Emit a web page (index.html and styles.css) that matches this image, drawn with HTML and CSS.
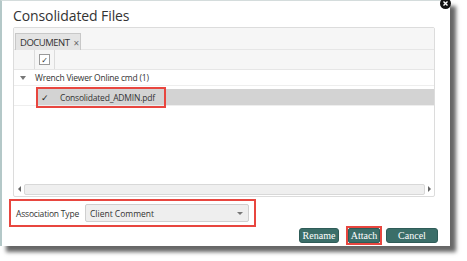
FILE: index.html
```html
<!DOCTYPE html>
<html>
<head>
<meta charset="utf-8">
<link rel="stylesheet" href="styles.css">
</head>
<body>
<div class="dialog">
  <span class="close"><svg width="11" height="11" viewBox="0 0 11 11"><circle cx="5.5" cy="5.5" r="5.5" fill="#111"/><path d="M3.5 3.5 L7.5 7.5 M7.5 3.5 L3.5 7.5" stroke="#fff" stroke-width="1.4"/></svg></span>
  <h1 class="title">Consolidated Files</h1>
  <div class="panel">
    <div class="toolbar">
      <span class="chip">DOCUMENT <span class="chip-x">×</span></span>
    </div>
    <div class="header">
      <div class="hcell first"></div>
      <div class="hcell check-cell"><span class="checkbox">✓</span></div>
      <div class="hcell rest"></div>
    </div>
    <div class="group-row"><span class="caret"></span>Wrench Viewer Online cmd (1)</div>
    <div class="data-row">
      <div class="indent"></div>
      <div class="sel">
        <span class="tick">✓</span><span class="fname">Consolidated_ADMIN.pdf</span>
      </div>
      <div class="highlight file-hl"></div>
    </div>
    <div class="body-space"></div>
    <div class="hscroll">
      <span class="arrow left"></span>
      <div class="track"></div>
      <span class="arrow right"></span>
    </div>
  </div>
  <div class="assoc highlight-box">
    <span class="assoc-label">Association Type</span>
    <div class="select">
      <span>Client Comment</span>
      <span class="sel-arrow"></span>
    </div>
  </div>
  <div class="buttons">
    <button class="btn rename">Rename</button>
    <span class="attach-wrap"><button class="btn attach">Attach</button></span>
    <button class="btn cancel">Cancel</button>
  </div>
</div>
</body>
</html>
```

FILE: styles.css
```css
* { box-sizing: border-box; }
html, body { margin: 0; padding: 0; background: #fff; }
body { width: 467px; height: 261px; overflow: hidden; font-family: "Open Sans", "DejaVu Sans", sans-serif; color: #333; }

.dialog {
  position: relative;
  width: 450px;
  height: 246px;
  background: #fff;
  border-left: 2px solid #b4c8c8;
  border-top: 1px solid #d4dcdc;
  padding: 0 0 0 11px;
  box-shadow: 6px 6px 4px rgba(0,0,0,0.6);
  display: flex;
  flex-direction: column;
}

.close {
  position: absolute;
  right: -1px;
  top: -3px;
  width: 11px;
  height: 11px;
  display: block;
  line-height: 0;
}

.title {
  margin: 0;
  height: 26px;
  padding-top: 6px;
  font-size: 14px;
  font-weight: 400;
  line-height: 18px;
  color: #333;
  letter-spacing: -0.1px;
}

.panel {
  width: 422px;
  height: 170px;
  border: 1px solid #dcdcdc;
  border-radius: 2px;
  display: flex;
  flex-direction: column;
}

.toolbar {
  height: 22px;
  background: #f6f6f6;
  border-bottom: 1px solid #e6e6e6;
  padding: 1px 0 0 1px;
}
.chip {
  display: inline-flex;
  align-items: center;
  height: 19px;
  width: 66px;
  padding-left: 4px;
  background: #e4e4e4;
  border: 1px solid #c8c8c8;
  font-size: 9.5px;
  color: #333;
  letter-spacing: -0.5px;
}
.chip-x { margin-left: 4px; color: #666; font-size: 10px; }

.header {
  height: 20px;
  background: #f6f6f6;
  border-bottom: 1px solid #e6e6e6;
  display: flex;
}
.hcell { height: 100%; }
.hcell.first { width: 21px; border-right: 1px solid #dcdcdc; }
.hcell.check-cell { width: 20px; border-right: 1px solid #dcdcdc; display: flex; align-items: center; justify-content: center; }
.checkbox {
  width: 11px; height: 11px;
  border: 1px solid #999;
  background: #fff;
  font-size: 8px;
  line-height: 9px;
  text-align: center;
  color: #333;
}
.hcell.rest { flex: 1; }

.group-row {
  height: 16px;
  display: flex;
  align-items: center;
  font-size: 8.5px;
  color: #333;
  padding-left: 6px;
  border-bottom: 1px solid #eee;
  letter-spacing: -0.2px;
}
.caret {
  width: 0; height: 0;
  border-left: 3px solid transparent;
  border-right: 3px solid transparent;
  border-top: 4px solid #777;
  margin-right: 9px;
}

.data-row {
  position: relative;
  height: 19px;
  display: flex;
  margin-top: 1px;
  border-bottom: 1px solid #eee;
}
.indent { width: 24px; }
.sel {
  flex: 1;
  margin-top: 2px;
  height: 16px;
  background: #d3d3d3;
  display: flex;
  align-items: center;
  font-size: 8.5px;
  color: #333;
}
.tick { width: 12px; margin-left: 3px; font-size: 9px; color: #222; }
.fname { margin-left: 7px; letter-spacing: -0.2px; }

.file-hl {
  position: absolute;
  left: 22px;
  top: 0;
  width: 130px;
  height: 21px;
}
.highlight, .highlight-box { border: 2px solid #e8463f; }

.body-space { flex: 1; }

.hscroll {
  height: 13px;
  display: flex;
  align-items: center;
  padding: 0 2px 1px 3px;
}
.track {
  flex: 1;
  height: 11px;
  background: #efefef;
  border: 1px solid #d8d8d8;
  border-radius: 2px;
  margin: 0 3px;
}
.arrow { width: 0; height: 0; border-top: 3px solid transparent; border-bottom: 3px solid transparent; }
.arrow.left { border-right: 3px solid #666; margin-left: 1px; }
.arrow.right { border-left: 3px solid #666; margin-right: 1px; }

.assoc {
  margin-top: 2px;
  margin-left: -4px;
  width: 247px;
  height: 28px;
  display: flex;
  align-items: center;
  padding-left: 5px;
}
.assoc-label { font-size: 8.5px; color: #333; width: 69px; letter-spacing: -0.2px; }
.select {
  width: 164px;
  height: 18px;
  background: #eeeeee;
  border: 1px solid #cfcfcf;
  border-radius: 2px;
  display: flex;
  align-items: center;
  justify-content: space-between;
  padding: 0 5px 0 4px;
  font-size: 8.5px;
  color: #333;
}
.sel-arrow {
  width: 0; height: 0;
  border-left: 3px solid transparent;
  border-right: 3px solid transparent;
  border-top: 3px solid #777;
}

.buttons {
  display: flex;
  justify-content: flex-end;
  align-items: center;
  padding-right: 12px;
  margin-top: -1px;
}
.btn {
  font-family: "Liberation Serif", "DejaVu Serif", serif;
  font-size: 10px;
  color: #fff;
  background: #3b6e69;
  border: 1px solid #2f5c58;
  border-radius: 3px;
  height: 15px;
  padding: 0;
  line-height: 12px;
}
.rename { width: 40px; margin-right: 7px; }
.attach-wrap { border: 2px solid #e8463f; padding: 0; display: flex; margin-right: 4px; }
.attach { width: 32px; border-radius: 2px; }
.cancel { width: 52px; }
```
